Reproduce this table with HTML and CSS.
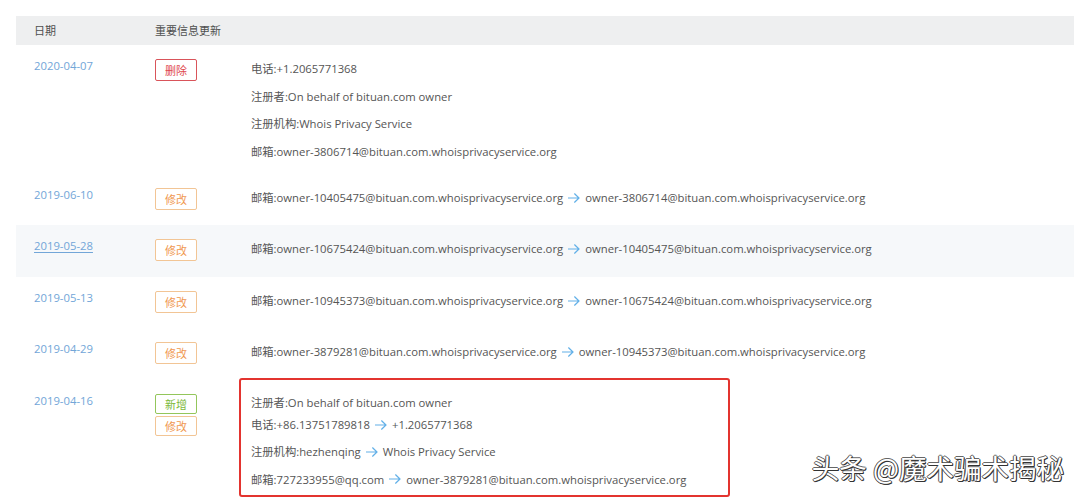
FILE: index.html
```html
<!DOCTYPE html>
<html lang="zh">
<head>
<meta charset="utf-8">
<link rel="stylesheet" href="styles.css">
</head>
<body>
<div class="page">
  <div class="table">
    <div class="thead">
      <div class="th th-date">日期</div>
      <div class="th">重要信息更新</div>
      <div class="th"></div>
    </div>

    <div class="row row-first">
      <div class="c-date"><span class="date">2020-04-07</span></div>
      <div class="c-tag"><span class="tag tag-del">删除</span></div>
      <div class="c-info">
        <div class="line">电话:+1.2065771368</div>
        <div class="line">注册者:On behalf of bituan.com owner</div>
        <div class="line">注册机构:Whois Privacy Service</div>
        <div class="line">邮箱:owner-3806714@bituan.com.whoisprivacyservice.org</div>
      </div>
    </div>

    <div class="row">
      <div class="c-date"><span class="date">2019-06-10</span></div>
      <div class="c-tag"><span class="tag tag-mod">修改</span></div>
      <div class="c-info">
        <div class="line">邮箱:owner-10405475@bituan.com.whoisprivacyservice.org<svg class="arrow" viewBox="0 0 12 10"><path d="M0.5 5H11M6.6 0.8L11 5L6.6 9.2"/></svg>owner-3806714@bituan.com.whoisprivacyservice.org</div>
      </div>
    </div>

    <div class="row row-hover">
      <div class="c-date"><span class="date date-active">2019-05-28</span></div>
      <div class="c-tag"><span class="tag tag-mod">修改</span></div>
      <div class="c-info">
        <div class="line">邮箱:owner-10675424@bituan.com.whoisprivacyservice.org<svg class="arrow" viewBox="0 0 12 10"><path d="M0.5 5H11M6.6 0.8L11 5L6.6 9.2"/></svg>owner-10405475@bituan.com.whoisprivacyservice.org</div>
      </div>
    </div>

    <div class="row">
      <div class="c-date"><span class="date">2019-05-13</span></div>
      <div class="c-tag"><span class="tag tag-mod">修改</span></div>
      <div class="c-info">
        <div class="line">邮箱:owner-10945373@bituan.com.whoisprivacyservice.org<svg class="arrow" viewBox="0 0 12 10"><path d="M0.5 5H11M6.6 0.8L11 5L6.6 9.2"/></svg>owner-10675424@bituan.com.whoisprivacyservice.org</div>
      </div>
    </div>

    <div class="row">
      <div class="c-date"><span class="date">2019-04-29</span></div>
      <div class="c-tag"><span class="tag tag-mod">修改</span></div>
      <div class="c-info">
        <div class="line">邮箱:owner-3879281@bituan.com.whoisprivacyservice.org<svg class="arrow" viewBox="0 0 12 10"><path d="M0.5 5H11M6.6 0.8L11 5L6.6 9.2"/></svg>owner-10945373@bituan.com.whoisprivacyservice.org</div>
      </div>
    </div>

    <div class="row">
      <div class="c-date"><span class="date">2019-04-16</span></div>
      <div class="c-tag tag-stack">
        <span class="tag tag-add tag-sm">新增</span>
        <span class="tag tag-mod tag-sm">修改</span>
      </div>
      <div class="c-info info-marked">
        <div class="group group-tight">
          <div class="line">注册者:On behalf of bituan.com owner</div>
          <div class="line">电话:+86.13751789818<svg class="arrow" viewBox="0 0 12 10"><path d="M0.5 5H11M6.6 0.8L11 5L6.6 9.2"/></svg>+1.2065771368</div>
        </div>
        <div class="group">
          <div class="line">注册机构:hezhenqing<svg class="arrow" viewBox="0 0 12 10"><path d="M0.5 5H11M6.6 0.8L11 5L6.6 9.2"/></svg>Whois Privacy Service</div>
          <div class="line">邮箱:727233955@qq.com<svg class="arrow" viewBox="0 0 12 10"><path d="M0.5 5H11M6.6 0.8L11 5L6.6 9.2"/></svg>owner-3879281@bituan.com.whoisprivacyservice.org</div>
        </div>
        <div class="mark-box"></div>
      </div>
    </div>
  </div>

  <div class="watermark">头条 @魔术骗术揭秘</div>
</div>
</body>
</html>
```

FILE: styles.css
```css
* { box-sizing: border-box; }

html, body {
  margin: 0;
  padding: 0;
  background: #ffffff;
}

body {
  font-family: "Open Sans", "Noto Sans CJK SC", sans-serif;
  font-size: 11.3px;
  color: #555555;
  width: 1080px;
  height: 501px;
  overflow: hidden;
}

.page {
  position: relative;
  height: 501px;
  padding: 16px 6px 0 16px;
}

.table {
  display: flex;
  flex-direction: column;
}

.thead,
.row {
  display: grid;
  grid-template-columns: 139px 96px 1fr;
}

.thead {
  height: 29px;
  align-items: center;
  background: #eeeff0;
}

.th {
  font-size: 11px;
  line-height: 16px;
  padding-top: 1px;
  color: #4f4f4f;
}

.th-date { padding-left: 18px; }

.row {
  min-height: 51.4px;
  padding: 10px 0 8px;
}

.row-first { min-height: 129px; }

.row-hover { background: #f6f8fa; }

.c-date {
  padding-left: 18px;
  line-height: 22px;
}

.date {
  color: #72a6d8;
}

.date-active {
  text-decoration: underline;
  text-underline-offset: 2px;
}

.c-tag {
  display: flex;
  flex-direction: column;
  align-items: flex-start;
  padding-top: 4px;
}

.tag-stack {
  padding-top: 4px;
  gap: 2px;
}

.tag {
  display: flex;
  align-items: center;
  justify-content: center;
  width: 42px;
  height: 22px;
  border: 1px solid;
  border-radius: 2px;
  font-size: 11px;
  background: #ffffff;
}

.tag-sm { height: 20px; }

.tag-del { color: #e0474c; border-color: #d9545a; }
.tag-mod { color: #f0974f; border-color: #f2c595; }
.tag-add { color: #7cb83a; border-color: #93c65b; }

.c-info {
  display: flex;
  flex-direction: column;
}

.line {
  line-height: 27.5px;
  white-space: nowrap;
  display: flex;
  align-items: center;
}

.group-tight { padding-top: 2px; }
.group-tight .line { line-height: 22px; }
.group-tight + .group { padding-top: 2.5px; }

.info-marked { position: relative; }

.arrow {
  width: 12px;
  height: 10px;
  margin: 0 5px;
  fill: none;
  stroke: #62b0e8;
  stroke-width: 1.2;
  stroke-linecap: round;
  stroke-linejoin: round;
}

.mark-box {
  position: absolute;
  left: -12px;
  top: -12px;
  width: 491px;
  height: 119px;
  border: 2.5px solid #e3342f;
  border-radius: 3px;
  pointer-events: none;
}

.watermark {
  position: absolute;
  right: 16px;
  top: 450px;
  font-family: "Noto Sans CJK SC", sans-serif;
  font-size: 27.5px;
  line-height: 34px;
  color: #ffffff;
  text-shadow:
    1px 1px 0 #333333,
    -1px 0 0 #555555,
    0 -1px 0 #666666,
    1px 0 0 #444444,
    0 1px 0 #333333;
}
```
